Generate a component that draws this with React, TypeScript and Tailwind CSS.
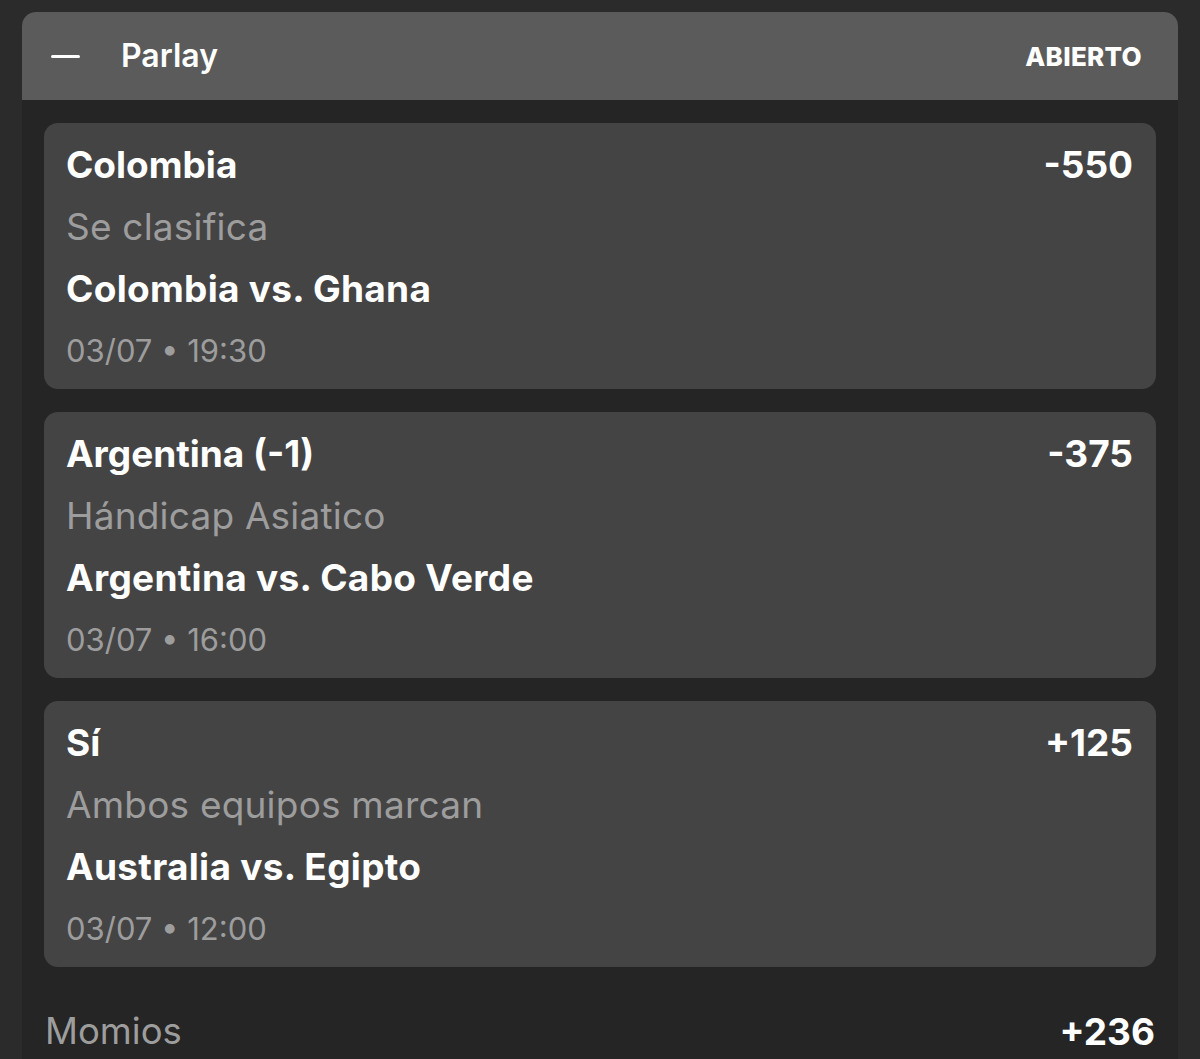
import React from "react";

type Leg = {
  pick: string;
  odds: string;
  market: string;
  match: string;
  date: string;
};

const legs: Leg[] = [
  { pick: "Colombia", odds: "-550", market: "Se clasifica", match: "Colombia vs. Ghana", date: "03/07 • 19:30" },
  { pick: "Argentina (-1)", odds: "-375", market: "Hándicap Asiatico", match: "Argentina vs. Cabo Verde", date: "03/07 • 16:00" },
  { pick: "Sí", odds: "+125", market: "Ambos equipos marcan", match: "Australia vs. Egipto", date: "03/07 • 12:00" },
];

function LegCard({ leg }: { leg: Leg }) {
  return (
    <div className="h-[266px] rounded-[14px] bg-[#454445] pl-[22px] pr-[23px] pt-[11px]">
      <div className="flex h-[62px] items-center justify-between text-[37px] font-bold text-white">
        <span>{leg.pick}</span>
        <span>{leg.odds}</span>
      </div>
      <div className="flex h-[62px] items-center text-[37px] tracking-[0.2px] text-[#9d9d9d]">{leg.market}</div>
      <div className="flex h-[62px] items-center text-[37px] font-bold tracking-[0.3px] text-white">{leg.match}</div>
      <div className="flex h-[62px] items-center text-[31px] text-[#9d9d9d]">{leg.date}</div>
    </div>
  );
}

export default function App() {
  return (
    <div
      className="h-[1059px] w-[1200px] overflow-hidden bg-[#2b2b2b] px-[22px] pt-[12px]"
      style={{ fontFamily: "Inter, 'Noto Sans', sans-serif" }}
    >
      <div className="h-full rounded-t-[14px] bg-[#252525]">
        <div className="flex h-[88px] items-center rounded-t-[14px] bg-[#5b5b5b] pl-[29px] pr-[36px]">
          <div className="h-[3px] w-[29px] rounded-full bg-white" />
          <span className="ml-[41px] text-[32px] font-semibold text-white">Parlay</span>
          <span className="ml-auto text-[26px] font-extrabold tracking-[0.3px] text-white">ABIERTO</span>
        </div>
        <div className="flex flex-col gap-[23px] px-[22px] pt-[23px]">
          {legs.map((leg) => (
            <LegCard key={leg.match} leg={leg} />
          ))}
        </div>
        <div className="mt-[37px] flex items-center justify-between px-[23px]">
          <span className="text-[36.5px] text-[#9d9d9d]">Momios</span>
          <span className="text-[37px] font-bold text-white">+236</span>
        </div>
      </div>
    </div>
  );
}
